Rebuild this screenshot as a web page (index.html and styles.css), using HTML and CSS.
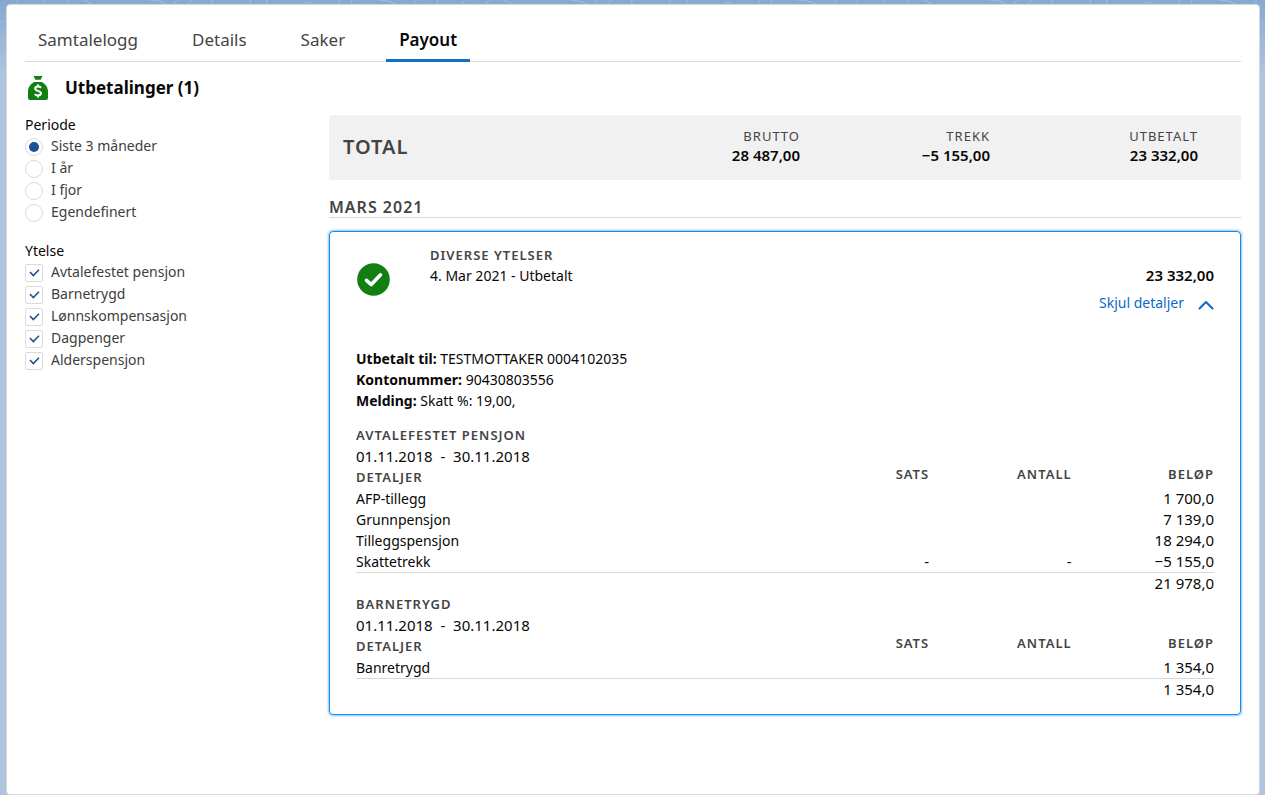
FILE: index.html
```html
<!DOCTYPE html>
<html lang="no">
<head>
<meta charset="utf-8">
<title>Utbetalinger</title>
<link rel="stylesheet" href="styles.css">
</head>
<body>
<svg class="backdrop" aria-hidden="true">
  <defs>
    <pattern id="waves" width="420" height="160" patternUnits="userSpaceOnUse">
      <path d="M0 22a22 22 0 0 0 16-30M38 8l12-14M62 8l14-16M92 4a60 60 0 0 0-34-8M150 0q14 0 20 8M172 6l10-12M188 4l8-10M212 6q-2-8 6-12M250 8V-4M262 8q8-6 4-14M304 6a4 4 0 1 1 8 0M336 8l6-12M350 6l4-12M378 0q14 0 24 8M410 8l10-12"/>
      <path d="M-14 70a30 30 0 0 1 24-34M404 40l12-16M408 52q8-4 8-18"/>
    </pattern>
    <linearGradient id="fade" x1="0" y1="0" x2="0" y2="1">
      <stop offset="0" stop-color="#fff"/><stop offset="1" stop-color="#000"/>
    </linearGradient>
    <mask id="top"><rect width="100%" height="75" fill="url(#fade)"/></mask>
  </defs>
  <rect width="100%" height="75" fill="url(#waves)" stroke="none" mask="url(#top)"/>
</svg>
<main class="card">
  <nav class="tabs">
    <a class="tab" href="#">Samtalelogg</a>
    <a class="tab" href="#">Details</a>
    <a class="tab" href="#">Saker</a>
    <a class="tab tab-active" href="#" aria-current="page">Payout</a>
  </nav>
  <header class="heading">
    <svg class="bag" viewBox="0 0 20 24" aria-hidden="true">
      <path fill="#117f11" d="M5.6 0h8.8l-1.700 3.800H7.300zM6.300 5.900h7.400C17.500 7.800 20 11.500 20 15.500V22a2 2 0 0 1-2 2H2a2 2 0 0 1-2-2v-6.500C0 11.500 2.500 7.800 6.300 5.900z"/>
      <path fill="none" stroke="#fff" stroke-width="2" d="M13 11.700c-.8-.8-1.800-1.100-3-1.100-1.700 0-2.800.8-2.800 2 0 1.500 1.400 1.900 2.800 2.300 1.600.5 3 1 3 2.400 0 1.300-1.200 2.100-3 2.100-1.300 0-2.400-.4-3.200-1.300M10 8.500v2.200M10 19.300v2.200"/>
    </svg>
    <h1 class="title">Utbetalinger (1)</h1>
  </header>
  <div class="layout">
    <form class="filters">
      <fieldset class="group">
        <legend class="legend">Periode</legend>
        <label class="option"><input class="radio" type="radio" name="periode" checked>Siste 3 måneder</label>
        <label class="option"><input class="radio" type="radio" name="periode">I år</label>
        <label class="option"><input class="radio" type="radio" name="periode">I fjor</label>
        <label class="option"><input class="radio" type="radio" name="periode">Egendefinert</label>
      </fieldset>
      <fieldset class="group">
        <legend class="legend">Ytelse</legend>
        <label class="option"><input class="check" type="checkbox" checked>Avtalefestet pensjon</label>
        <label class="option"><input class="check" type="checkbox" checked>Barnetrygd</label>
        <label class="option"><input class="check" type="checkbox" checked>Lønnskompensasjon</label>
        <label class="option"><input class="check" type="checkbox" checked>Dagpenger</label>
        <label class="option"><input class="check" type="checkbox" checked>Alderspensjon</label>
      </fieldset>
    </form>
    <div class="content">
      <section class="total">
        <h2 class="total-title">TOTAL</h2>
        <dl class="sums">
          <div class="sum"><dt class="sum-label">BRUTTO</dt><dd class="amount">28 487,00</dd></div>
          <div class="sum"><dt class="sum-label">TREKK</dt><dd class="amount">−5 155,00</dd></div>
          <div class="sum sum-last"><dt class="sum-label">UTBETALT</dt><dd class="amount">23 332,00</dd></div>
        </dl>
      </section>
      <h2 class="month">MARS 2021</h2>
      <article class="payment">
        <header class="payment-head">
          <svg class="status" viewBox="0 0 34 34" aria-hidden="true">
            <circle cx="17.500" cy="17.500" r="16.300" fill="#117f11"/>
            <path fill="none" stroke="#fff" stroke-width="3.600" stroke-linecap="round" stroke-linejoin="round" d="M10.500 18.300l4.800 4.300 9.200-9.800"/>
          </svg>
          <div class="payment-name">
            <h3 class="caps">DIVERSE YTELSER</h3>
            <p>4. Mar 2021 - Utbetalt</p>
          </div>
          <div class="payment-sum">
            <p class="amount">23 332,00</p>
            <button class="toggle" type="button">Skjul detaljer
              <svg class="chevron" viewBox="0 0 16 10" aria-hidden="true"><path d="M1.500 8.500L8 2l6.500 6.500" fill="none" stroke="#0b6bc8" stroke-width="2" stroke-linecap="round" stroke-linejoin="round"/></svg>
            </button>
          </div>
        </header>
        <div class="info">
          <p><b>Utbetalt til:</b> TESTMOTTAKER 0004102035</p>
          <p><b>Kontonummer:</b> 90430803556</p>
          <p><b>Melding:</b> Skatt %: 19,00,</p>
        </div>
        <section>
          <h3 class="caps">AVTALEFESTET PENSJON</h3>
          <p class="dates">01.11.2018 &nbsp;-&nbsp; 30.11.2018</p>
          <table class="details">
            <thead><tr><th class="name">DETALJER</th><th>SATS</th><th>ANTALL</th><th>BELØP</th></tr></thead>
            <tbody>
              <tr><td class="name">AFP-tillegg</td><td></td><td></td><td>1 700,0</td></tr>
              <tr><td class="name">Grunnpensjon</td><td></td><td></td><td>7 139,0</td></tr>
              <tr><td class="name">Tilleggspensjon</td><td></td><td></td><td>18 294,0</td></tr>
              <tr><td class="name">Skattetrekk</td><td>-</td><td>-</td><td>−5 155,0</td></tr>
            </tbody>
            <tfoot><tr><td colspan="4">21 978,0</td></tr></tfoot>
          </table>
        </section>
        <section>
          <h3 class="caps">BARNETRYGD</h3>
          <p class="dates">01.11.2018 &nbsp;-&nbsp; 30.11.2018</p>
          <table class="details">
            <thead><tr><th class="name">DETALJER</th><th>SATS</th><th>ANTALL</th><th>BELØP</th></tr></thead>
            <tbody>
              <tr><td class="name">Banretrygd</td><td></td><td></td><td>1 354,0</td></tr>
            </tbody>
            <tfoot><tr><td colspan="4">1 354,0</td></tr></tfoot>
          </table>
        </section>
      </article>
    </div>
  </div>
</main>
</body>
</html>
```
FILE: styles.css
```css
* {
  box-sizing: border-box;
}

body {
  display: flex;
  flex-direction: column;
  min-height: 100vh;
  margin: 0;
  padding: 4px 5px 0 6px;
  background: #b0c4df linear-gradient(#86a8d0, #b0c4df) no-repeat top / 100% 75px;
  color: #080707;
  font: 14px/21px "Noto Sans", sans-serif;
}

h1, h2, h3, p, dl, dd {
  margin: 0;
}

.backdrop {
  position: absolute;
  top: 0;
  left: 0;
  width: 100%;
  height: 75px;
  stroke: #a3bfdf;
  fill: none;
}

.card {
  position: relative;
  flex: 1;
  padding: 17px 18px;
  background: #fff;
  border: 1px solid #d8d8d8;
  border-radius: 4px;
}

.tabs {
  display: flex;
  gap: 28px;
  border-bottom: 1px solid #d8d8d8;
}

.tab {
  padding: 0 13px 2px;
  margin-bottom: -1px;
  border-bottom: 3px solid transparent;
  color: #444;
  font-size: 17px;
  line-height: 35px;
  text-decoration: none;
}

.tab-active {
  border-color: #1070d0;
  color: #080707;
  font-weight: 600;
}

.heading {
  display: flex;
  align-items: center;
  gap: 17px;
  padding: 14px 3px;
}

.bag {
  width: 20px;
  height: 24px;
}

.title {
  font-size: 17px;
  font-weight: 700;
  line-height: 24px;
}

.layout {
  display: flex;
}

.filters {
  flex: 0 0 25%;
}

.group {
  display: flex;
  flex-direction: column;
  min-width: 0;
  margin: 0 0 17px;
  padding: 0;
  border: 0;
}

.legend {
  padding: 0;
}

.option {
  display: flex;
  align-items: center;
  gap: 8px;
  height: 22px;
  color: #3e3e3c;
  line-height: 20px;
}

.radio,
.check {
  appearance: none;
  display: grid;
  place-items: center;
  width: 18px;
  height: 18px;
  margin: 1px 0 0;
  background: #fff;
  border: 1px solid #dddbda;
}

.radio {
  border-radius: 50%;
}

.check {
  border-radius: 2px;
}

.radio:checked::before {
  content: "";
  width: 10px;
  height: 10px;
  border-radius: 50%;
  background: #1b5297;
}

.check:checked::before {
  content: "";
  width: 9px;
  height: 5px;
  margin-bottom: 2px;
  border: solid #1b5297;
  border-width: 0 0 2px 2px;
  transform: rotate(-45deg) scale(0.8);
}

.content {
  flex: 1;
  padding-top: 1px;
}

.total {
  display: flex;
  align-items: center;
  justify-content: space-between;
  margin-bottom: 17px;
  padding: 12px 43px 15px 14px;
  background: #f1f1f1;
  border-radius: 3px;
}

.total-title {
  color: #444;
  font-size: 20px;
  font-weight: 600;
  letter-spacing: 1px;
}

.sums {
  display: flex;
  text-align: right;
}

.sum {
  width: 190px;
  line-height: 19px;
}

.sum-last {
  width: 208px;
}

.sum-label {
  color: #444;
  font-size: 13px;
  letter-spacing: 1px;
}

.amount {
  font-size: 15px;
  font-weight: 600;
}

.month {
  margin-bottom: 13px;
  border-bottom: 1px solid #d8d8d8;
  color: #444;
  font-size: 16px;
  font-weight: 600;
  line-height: 20px;
  letter-spacing: 1px;
}

.payment {
  padding: 13px 26px 15px;
  border: 1px solid #1589ee;
  border-radius: 4px;
  box-shadow: 0 0 3px #1589ee;
}

.payment-head {
  display: flex;
}

.status {
  width: 34px;
  height: 34px;
  margin: 17px 40px 0 0;
}

.payment-sum {
  display: flex;
  flex-direction: column;
  align-items: flex-end;
  gap: 6px;
  margin: 20px 0 0 auto;
}

.toggle {
  display: flex;
  align-items: center;
  gap: 14px;
  padding: 0;
  border: 0;
  background: none;
  color: #0b6bc8;
  font: inherit;
}

.chevron {
  width: 16px;
  height: 10px;
  margin-top: 4px;
}

.info {
  margin: 35px 0 14px;
}

.dates,
td {
  font-size: 15px;
}

.caps,
th {
  color: #444;
  font-size: 13px;
  font-weight: 600;
  letter-spacing: 1px;
}

.caps {
  line-height: 20px;
}

.dates {
  line-height: 22px;
}

.details {
  width: 100%;
  table-layout: fixed;
  border-collapse: collapse;
}

th,
td {
  width: 16.6%;
  height: 21px;
  padding: 0;
  line-height: 21px;
  text-align: right;
}

th {
  line-height: 15px;
  vertical-align: top;
}

.name {
  width: auto;
  text-align: left;
  line-height: 21px;
}

td.name {
  font-size: 14px;
}

tfoot td {
  border-top: 1px solid #d8d8d8;
  line-height: 20px;
}
```
